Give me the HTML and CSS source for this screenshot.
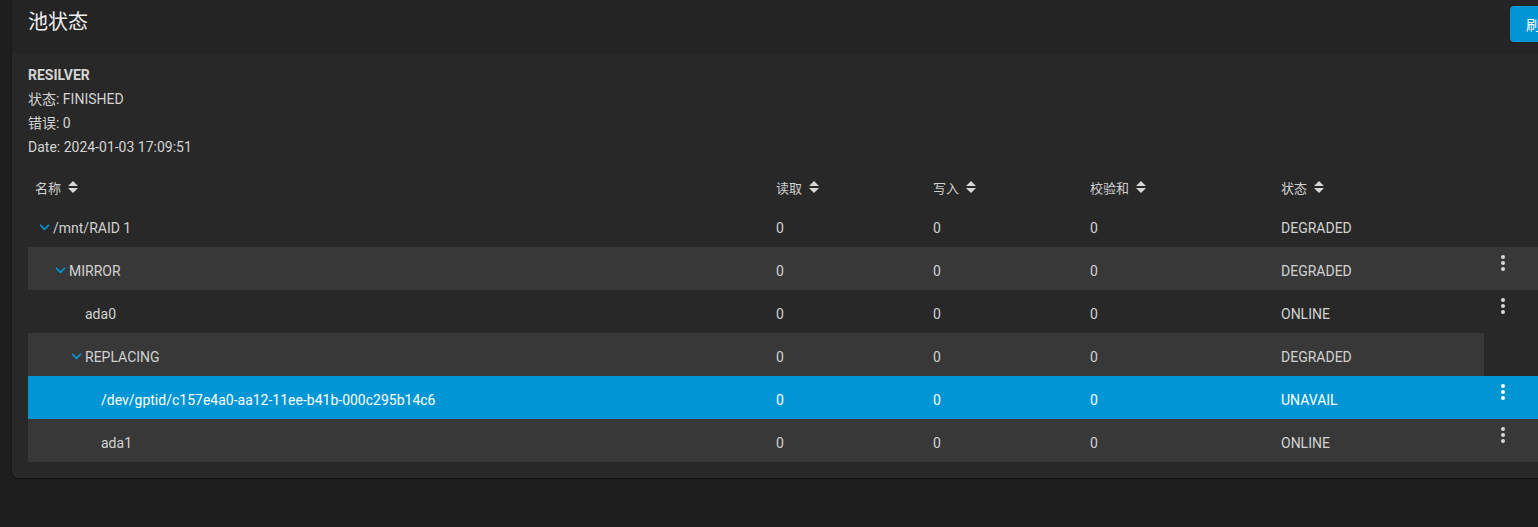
FILE: index.html
```html
<!DOCTYPE html>
<html lang="zh">
<head>
<meta charset="utf-8">
<title>池状态</title>
<link rel="stylesheet" href="styles.css">
</head>
<body>
<div class="card">
  <div class="card-header">
    <h1 class="title">池状态</h1>
    <button class="btn-refresh">刷新</button>
  </div>
  <div class="card-body">
    <div class="scan">
      <div class="scan-line scan-title">RESILVER</div>
      <div class="scan-line">状态: FINISHED</div>
      <div class="scan-line">错误: 0</div>
      <div class="scan-line">Date: 2024-01-03 17:09:51</div>
    </div>
    <div class="table">
      <div class="row head">
        <div class="cell name-head">名称 <span class="sort"><svg viewBox="0 0 10 12" width="10" height="12"><path d="M5 0 L10 5 H0 Z M0 7 H10 L5 12 Z" fill="currentColor"/></svg></span></div>
        <div class="cell">读取 <span class="sort"><svg viewBox="0 0 10 12" width="10" height="12"><path d="M5 0 L10 5 H0 Z M0 7 H10 L5 12 Z" fill="currentColor"/></svg></span></div>
        <div class="cell">写入 <span class="sort"><svg viewBox="0 0 10 12" width="10" height="12"><path d="M5 0 L10 5 H0 Z M0 7 H10 L5 12 Z" fill="currentColor"/></svg></span></div>
        <div class="cell">校验和 <span class="sort"><svg viewBox="0 0 10 12" width="10" height="12"><path d="M5 0 L10 5 H0 Z M0 7 H10 L5 12 Z" fill="currentColor"/></svg></span></div>
        <div class="cell">状态 <span class="sort"><svg viewBox="0 0 10 12" width="10" height="12"><path d="M5 0 L10 5 H0 Z M0 7 H10 L5 12 Z" fill="currentColor"/></svg></span></div>
        <div class="cell"></div>
      </div>

      <div class="row">
        <div class="cell name lvl1"><span class="toggle"><svg viewBox="0 0 12 8" width="11" height="7"><path d="M1 1 L6 6 L11 1" fill="none" stroke="currentColor" stroke-width="2"/></svg></span>/mnt/RAID 1</div>
        <div class="cell">0</div><div class="cell">0</div><div class="cell">0</div>
        <div class="cell">DEGRADED</div>
        <div class="cell"></div>
      </div>

      <div class="row striped">
        <div class="cell name lvl2"><span class="toggle"><svg viewBox="0 0 12 8" width="11" height="7"><path d="M1 1 L6 6 L11 1" fill="none" stroke="currentColor" stroke-width="2"/></svg></span>MIRROR</div>
        <div class="cell">0</div><div class="cell">0</div><div class="cell">0</div>
        <div class="cell">DEGRADED</div>
        <div class="cell action"><span class="kebab"><i></i><i></i><i></i></span></div>
      </div>

      <div class="row">
        <div class="cell name lvl3"><span class="toggle"></span>ada0</div>
        <div class="cell">0</div><div class="cell">0</div><div class="cell">0</div>
        <div class="cell">ONLINE</div>
        <div class="cell action"><span class="kebab"><i></i><i></i><i></i></span></div>
      </div>

      <div class="row striped no-action">
        <div class="cell name lvl3"><span class="toggle"><svg viewBox="0 0 12 8" width="11" height="7"><path d="M1 1 L6 6 L11 1" fill="none" stroke="currentColor" stroke-width="2"/></svg></span>REPLACING</div>
        <div class="cell">0</div><div class="cell">0</div><div class="cell">0</div>
        <div class="cell">DEGRADED</div>
      </div>

      <div class="row selected">
        <div class="cell name lvl4"><span class="toggle"></span>/dev/gptid/c157e4a0-aa12-11ee-b41b-000c295b14c6</div>
        <div class="cell">0</div><div class="cell">0</div><div class="cell">0</div>
        <div class="cell">UNAVAIL</div>
        <div class="cell action"><span class="kebab"><i></i><i></i><i></i></span></div>
      </div>

      <div class="row striped">
        <div class="cell name lvl4"><span class="toggle"></span>ada1</div>
        <div class="cell">0</div><div class="cell">0</div><div class="cell">0</div>
        <div class="cell">ONLINE</div>
        <div class="cell action"><span class="kebab"><i></i><i></i><i></i></span></div>
      </div>
    </div>
  </div>
</div>
</body>
</html>
```

FILE: styles.css
```css
html, body {
  margin: 0;
  padding: 0;
  background: #1e1e1e;
  overflow: hidden;
  height: 100%;
}
body {
  font-family: Roboto, "Noto Sans CJK SC", sans-serif;
  color: #d2d2d2;
  font-size: 14px;
}
.card {
  margin-left: 12px;
  width: 1560px;
  background: #282828;
  border-radius: 0 0 6px 6px;
  box-shadow: 0 1px 2px rgba(0,0,0,0.5);
}
.card-header {
  height: 54px;
  background: #242424;
  display: flex;
  align-items: flex-start;
  padding-left: 16px;
  box-sizing: border-box;
}
.title {
  margin: 0;
  font-weight: 400;
  font-size: 20px;
  line-height: 28px;
  padding-top: 8px;
  color: #efefef;
}
.btn-refresh {
  margin-left: auto;
  margin-top: 6px;
  margin-right: 0;
  width: 62px;
  height: 36px;
  border: 0;
  border-radius: 4px;
  background: #0095d5;
  color: #ffffff;
  font-family: Roboto, "Noto Sans CJK SC", sans-serif;
  font-size: 14px;
  text-align: left;
  padding-left: 16px;
}
.card-body {
  padding: 9px 16px 16px 16px;
}
.scan-line {
  font-size: 14px;
  line-height: 24px;
  color: #d4d4d4;
}
.scan-title {
  font-weight: 700;
}
.table {
  margin-top: 7px;
  display: flex;
  flex-direction: column;
}
.row {
  display: grid;
  grid-template-columns: 748px 157px 157px 191px 203px 60px;
  height: 43px;
  align-items: center;
}
.row.head {
  height: 38px;
  font-size: 13px;
  color: #d0d0d0;
}
.row .cell {
  padding-top: 5px;
  white-space: nowrap;
}
.row.head .cell {
  padding-top: 4px;
  display: flex;
  align-items: center;
}
.name-head {
  padding-left: 7px;
}
.sort {
  display: inline-flex;
  margin-left: 7px;
  color: #d8d8d8;
}
.row.striped {
  background: #383838;
}
.row.no-action {
  grid-template-columns: 748px 157px 157px 191px 203px;
  width: 1456px;
}
.row.selected {
  background: #0095d5;
  color: #ffffff;
}
.name {
  display: flex;
  align-items: center;
}
.toggle {
  width: 17px;
  flex: 0 0 17px;
  display: inline-flex;
  align-items: center;
  justify-content: flex-start;
  padding-left: 3px;
  box-sizing: border-box;
  color: #0095d5;
  margin-top: -2px;
}
.lvl1 { padding-left: 8px; }
.lvl2 { padding-left: 24px; }
.lvl3 { padding-left: 40px; }
.lvl4 { padding-left: 56px; }
.action {
  align-self: start;
  padding-top: 8px !important;
}
.kebab {
  display: flex;
  flex-direction: column;
  align-items: center;
  width: 4px;
  margin-left: 17px;
  gap: 2px;
}
.kebab i {
  display: block;
  width: 4px;
  height: 4px;
  border-radius: 50%;
  background: #d8d8d8;
}
.selected .kebab i {
  background: #ffffff;
}
```
